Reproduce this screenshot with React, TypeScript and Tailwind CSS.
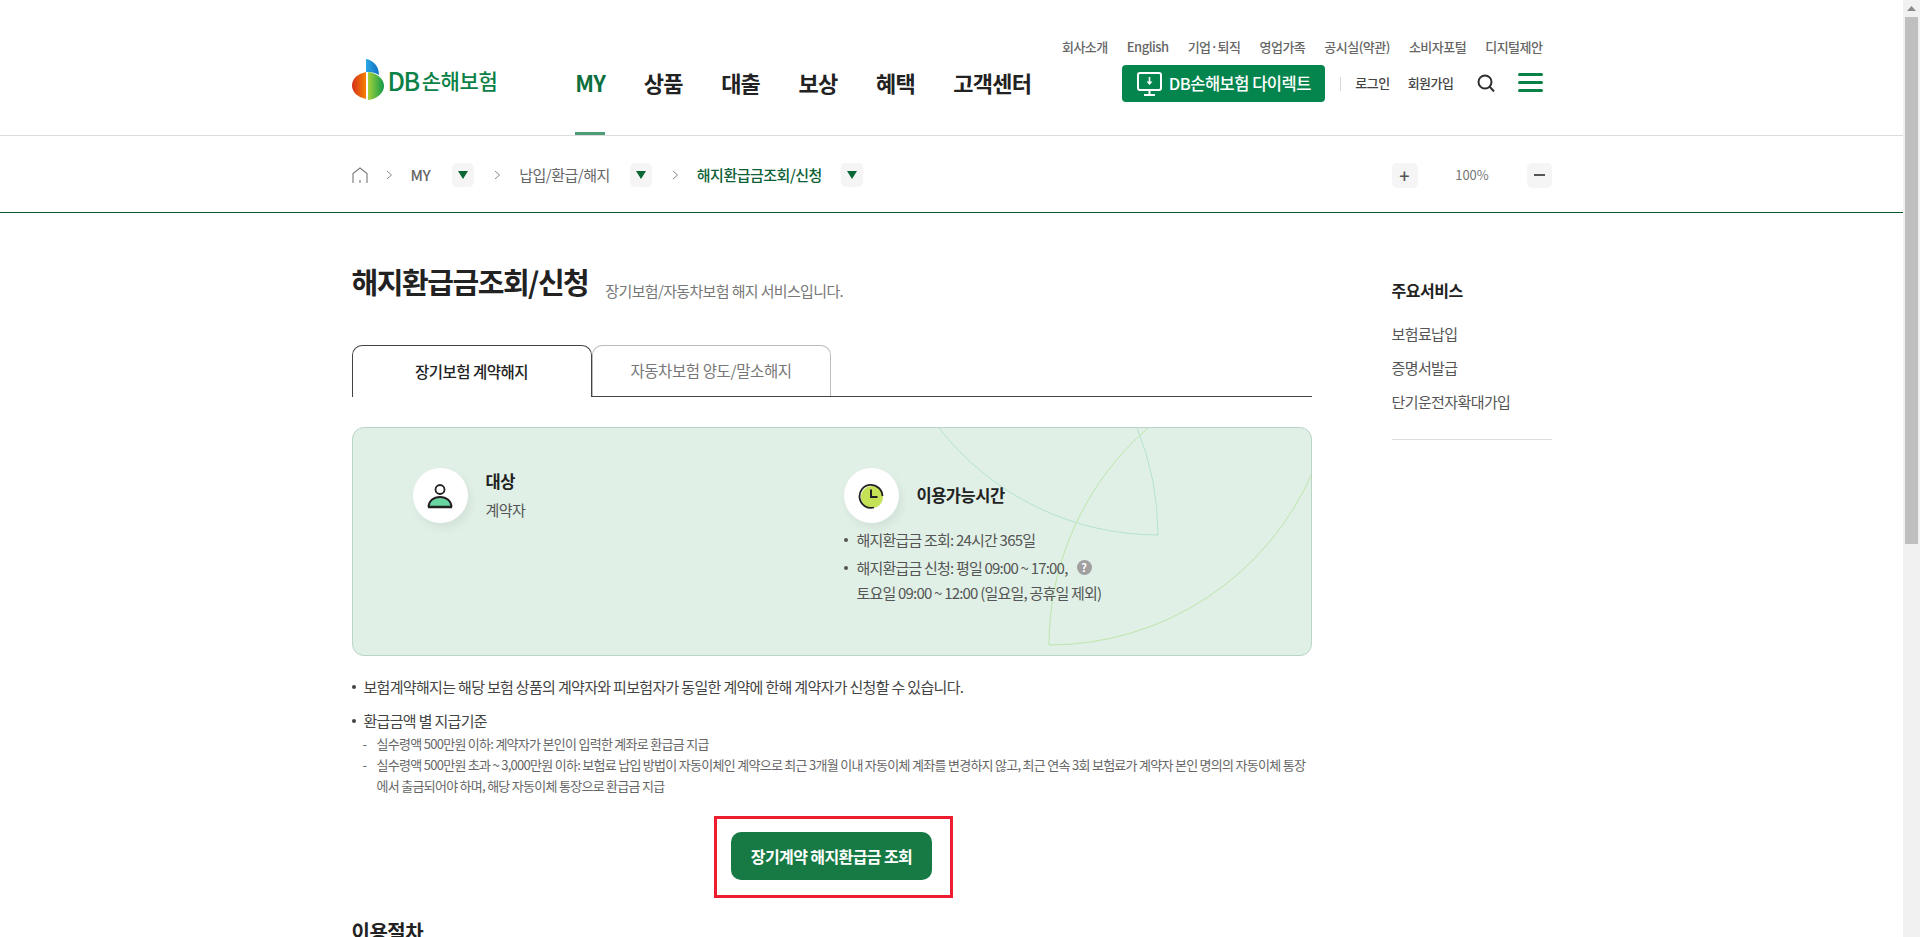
import React from 'react';

const UTIL_LINKS = ['회사소개', 'English', '기업·퇴직', '영업가족', '공시실(약관)', '소비자포털', '디지털제안'];
const NAV_LINKS = ['MY', '상품', '대출', '보상', '혜택', '고객센터'];
const SIDE_LINKS = ['보험료납입', '증명서발급', '단기운전자확대가입'];

const Logo = () => (
  <div className="flex items-center h-[42px]">
    <svg width="33" height="42" viewBox="0 0 33 42" className="shrink-0">
      <defs>
        <linearGradient id="lgOrange" x1="0" x2="1" y1="0" y2="0">
          <stop offset="0" stopColor="#d5301f" />
          <stop offset="1" stopColor="#f58200" />
        </linearGradient>
        <linearGradient id="lgBlue" x1="0" x2="1" y1="0" y2="0">
          <stop offset="0" stopColor="#2aa6e6" />
          <stop offset="1" stopColor="#0f6fc0" />
        </linearGradient>
        <linearGradient id="lgGreen" x1="0" x2="1" y1="0" y2="0">
          <stop offset="0" stopColor="#a5d13a" />
          <stop offset="1" stopColor="#0d9a48" />
        </linearGradient>
      </defs>
      <path d="M14 13C5 15 0 20 0 26.500S5 38 14 40z" fill="url(#lgOrange)" />
      <path d="M14 0c7 1 13 7 13 16-3-2-7-3-11-3h-2z" fill="url(#lgBlue)" />
      <path d="M16 13c9 1 16 7 16 14s-7 13-16 14z" fill="url(#lgGreen)" />
    </svg>
    <span className="ml-[3px] text-[25px] font-medium leading-none tracking-[-1.5px] text-[#0a8146]">DB</span>
    <span className="ml-[3px] text-[21px] font-medium leading-none tracking-[-0.4px] text-[#0a8146]">손해보험</span>
  </div>
);

const HomeIcon = () => (
  <svg width="17" height="17" viewBox="0 0 17 17" fill="none" stroke="#777" strokeWidth="1.1">
    <path d="M1 16V6.500L8 1l7 5.500V16" />
    <path d="M8 13v3" />
  </svg>
);

const Chevron = () => (
  <svg width="7" height="10" viewBox="0 0 7 10" fill="none" stroke="#888" strokeWidth="1">
    <path d="M1 1l4.500 4L1 9" />
  </svg>
);

const DropBox = () => (
  <span className="flex w-[22px] h-[24px] items-center justify-center rounded-[5px] bg-[#f5f5f5]">
    <svg width="10" height="8" viewBox="0 0 10 8">
      <path d="M0 0h10L5 8z" fill="#0a6634" />
    </svg>
  </span>
);

const MonitorIcon = () => (
  <svg width="25" height="24" viewBox="0 0 25 24" fill="none" stroke="#fff" strokeWidth="2">
    <rect x="1" y="1" width="23" height="17" rx="2" />
    <path d="M7 23h11M12.500 18v5" />
    <path d="M12.500 5v7" strokeWidth="1.6" />
    <path d="M9.500 9.500h6l-3 3.500z" fill="#fff" stroke="none" />
  </svg>
);

const SearchIcon = () => (
  <svg width="18" height="18" viewBox="0 0 18 18" fill="none" stroke="#2f2f2f" strokeWidth="2">
    <circle cx="8" cy="8" r="6.500" />
    <path d="M12.500 12.500l4.500 5" />
  </svg>
);

const PersonIcon = () => (
  <svg width="26" height="26" viewBox="0 0 26 26" fill="none">
    <path d="M2 24c0-6 4-9 11-9s11 3 11 9z" fill="#69d6a2" />
    <circle cx="13" cy="6.500" r="4.500" stroke="#222" strokeWidth="1.800" />
    <path d="M1.500 24c0-6 5-10 11.500-10s11.500 4 11.500 10" stroke="#222" strokeWidth="1.800" />
    <path d="M1 24h24" stroke="#222" strokeWidth="2.400" />
  </svg>
);

const ClockIcon = () => (
  <svg width="26" height="26" viewBox="0 0 26 26" fill="none">
    <circle cx="14" cy="14" r="11" fill="#c5e155" />
    <path d="M16 24.500A11.500 11.500 0 1 1 24.500 13" stroke="#222" strokeWidth="1.800" />
    <path d="M13 6.500V14h6.500" stroke="#222" strokeWidth="2" />
  </svg>
);

const BoxArcs = () => (
  <svg className="absolute left-0 top-0" width="960" height="229" viewBox="0 0 960 229" fill="none">
    <path d="M586 0A278 278 0 0 0 805 107A283 283 0 0 0 784 0" stroke="#b6e2cd" strokeWidth="1" />
    <path d="M795 0A287 287 0 0 0 696 217A287 287 0 0 0 960 43" stroke="#bde6a8" strokeWidth="1" />
  </svg>
);

export default function App() {
  return (
    <div className="flex h-[937px] w-full overflow-hidden bg-white font-['Noto_Sans_CJK_KR','Noto_Sans',sans-serif] text-[#333]">
      <div className="min-w-0 flex-1">
        {/* Header */}
        <header className="h-[136px] border-b border-[#dcdcdc]">
          <div className="mx-auto flex h-[135px] w-[1200px]">
            <div className="mt-[59px] self-start">
              <Logo />
            </div>
            <nav className="ml-[78px] flex gap-[38.500px]">
              {NAV_LINKS.map((item, i) => (
                <a
                  key={item}
                  className={`flex h-[135px] items-start border-b-[3px] pt-[67px] text-[22px] leading-[30px] font-bold tracking-[-0.8px] ${
                    i === 0 ? 'border-[#4d9e76] text-[#0e6f3e]' : 'border-transparent text-[#222]'
                  }`}
                >
                  {item}
                </a>
              ))}
            </nav>
            <div className="ml-auto flex flex-col items-end pr-[9px] pt-[37px]">
              <ul className="flex h-[20px] items-center gap-[19px] text-[13px] font-medium tracking-[-0.5px] text-[#666]">
                {UTIL_LINKS.map((item) => (
                  <li key={item}>{item}</li>
                ))}
              </ul>
              <div className="mt-[8px] flex items-center">
                <a className="flex h-[37px] w-[203px] items-center justify-center gap-[7px] rounded-[4px] bg-[#05854e] text-[16.500px] font-medium tracking-[-0.5px] text-white">
                  <MonitorIcon />
                  DB손해보험 다이렉트
                </a>
                <span className="ml-[15px] h-[14px] w-px bg-[#d8d8d8]" />
                <a className="ml-[14px] pb-[2px] text-[13px] font-medium tracking-[-0.5px] text-[#444]">로그인</a>
                <a className="ml-[18px] pb-[2px] text-[13px] font-medium tracking-[-0.5px] text-[#444]">회원가입</a>
                <span className="ml-[23px] flex pb-[2px]">
                  <SearchIcon />
                </span>
                <span className="ml-[23px] flex w-[25px] flex-col gap-[5px] pb-[2px]">
                  <span className="h-[3px] rounded-sm bg-[#0a8146]" />
                  <span className="h-[3px] rounded-sm bg-[#0a8146]" />
                  <span className="h-[3px] rounded-sm bg-[#0a8146]" />
                </span>
              </div>
            </div>
          </div>
        </header>

        {/* Breadcrumb */}
        <div className="h-[77px] border-b border-[#00582c]">
          <div className="mx-auto flex h-[76px] w-[1200px] items-center pt-[2px]">
            <HomeIcon />
            <span className="ml-[17px] flex"><Chevron /></span>
            <span className="ml-[18px] text-[15px] font-medium tracking-[-0.5px] text-[#666]">MY</span>
            <span className="ml-[22px]"><DropBox /></span>
            <span className="ml-[20px] flex"><Chevron /></span>
            <span className="ml-[18px] text-[15px] tracking-[-0.5px] text-[#666]">납입/환급/해지</span>
            <span className="ml-[20px]"><DropBox /></span>
            <span className="ml-[20px] flex"><Chevron /></span>
            <span className="ml-[18px] text-[15px] font-medium tracking-[-0.5px] text-[#0d6136]">해지환급금조회/신청</span>
            <span className="ml-[19px]"><DropBox /></span>
            <div className="ml-auto flex items-center">
              <span className="flex h-[25px] w-[26px] items-center justify-center rounded-[5px] bg-[#f5f5f5] text-[18px] font-medium leading-none text-[#555]">+</span>
              <span className="w-[109px] text-center text-[13px] text-[#777]">100%</span>
              <span className="flex h-[25px] w-[25px] items-center justify-center rounded-[5px] bg-[#f5f5f5]">
                <span className="h-[2px] w-[11px] bg-[#555]" />
              </span>
            </div>
          </div>
        </div>

        <div className="mx-auto flex w-[1200px]">
          {/* Main column */}
          <main className="w-[960px]">
            <div className="flex items-start pt-[44px]">
              <h1 className="text-[29px] leading-[48px] font-bold tracking-[-1.450px] text-[#222]">해지환급금조회/신청</h1>
              <p className="ml-[17px] mt-[23px] text-[15px] leading-[22px] tracking-[-0.650px] text-[#777]">장기보험/자동차보험 해지 서비스입니다.</p>
            </div>

            <div className="mt-[40px] flex h-[52px] border-b border-[#444]">
              <div className="z-10 flex h-[52px] w-[240px] items-center justify-center rounded-t-[10px] border border-b-0 border-[#444] bg-white text-[15.500px] font-medium tracking-[-0.5px] text-[#222]">
                장기보험 계약해지
              </div>
              <div className="flex h-[51px] w-[239px] items-center justify-center rounded-t-[10px] border border-b-0 border-[#bbb] text-[15.500px] tracking-[-0.4px] text-[#777]">
                자동차보험 양도/말소해지
              </div>
            </div>

            <section className="relative mt-[30px] flex h-[229px] w-[960px] overflow-hidden rounded-[12px] border border-[#b9d5c6] bg-[#e0f0e6] pl-[60px] pt-[40px]">
              <BoxArcs />
              <div className="relative flex w-[431px]">
                <span className="flex size-[55px] items-center justify-center rounded-full bg-white shadow-[3px_5px_10px_rgba(0,0,0,0.06)]">
                  <PersonIcon />
                </span>
                <div className="ml-[18px]">
                  <p className="text-[16.500px] leading-[26px] font-bold tracking-[-0.5px] text-[#222]">대상</p>
                  <p className="mt-[4px] text-[15px] leading-[24px] tracking-[-0.6px] text-[#555]">계약자</p>
                </div>
              </div>
              <div className="relative">
                <div className="flex items-center">
                  <span className="flex size-[55px] items-center justify-center rounded-full bg-white shadow-[3px_5px_10px_rgba(0,0,0,0.06)]">
                    <ClockIcon />
                  </span>
                  <p className="ml-[18px] text-[16.500px] font-bold tracking-[-0.5px] text-[#222]">이용가능시간</p>
                </div>
                <ul className="mt-[4px] text-[15px] leading-[25px] tracking-[-0.8px] text-[#555]">
                  <li className="flex">
                    <span className="mr-[9px] mt-[11px] size-[4px] rounded-full bg-[#555]" />
                    해지환급금 조회: 24시간 365일
                  </li>
                  <li className="mt-[3px] flex">
                    <span className="mr-[9px] mt-[11px] size-[4px] shrink-0 rounded-full bg-[#555]" />
                    <span>
                      <span className="flex items-center">
                        해지환급금 신청: 평일 09:00 ~ 17:00,
                        <span className="ml-[9px] flex size-[15px] items-center justify-center rounded-full bg-[#a0a0a0] text-[11px] font-bold leading-none tracking-normal text-white">?</span>
                      </span>
                      토요일 09:00 ~ 12:00 (일요일, 공휴일 제외)
                    </span>
                  </li>
                </ul>
              </div>
            </section>

            <div className="mt-[20px] text-[15px] tracking-[-0.680px] text-[#444]">
              <p className="flex h-[22px] items-center">
                <span className="mr-[8px] size-[4px] rounded-full bg-[#444]" />
                보험계약해지는 해당 보험 상품의 계약자와 피보험자가 동일한 계약에 한해 계약자가 신청할 수 있습니다.
              </p>
              <p className="mt-[12px] flex h-[22px] items-center">
                <span className="mr-[8px] size-[4px] rounded-full bg-[#444]" />
                환급금액 별 지급기준
              </p>
              <ul className="mt-[1px] text-[13px] leading-[21px] tracking-[-0.720px] text-[#666]">
                <li className="flex">
                  <span className="w-[25px] pl-[11px]">-</span>
                  실수령액 500만원 이하: 계약자가 본인이 입력한 계좌로 환급금 지급
                </li>
                <li className="flex">
                  <span className="w-[25px] shrink-0 pl-[11px]">-</span>
                  <span>
                    실수령액 500만원 초과 ~ 3,000만원 이하: 보험료 납입 방법이 자동이체인 계약으로 최근 3개월 이내 자동이체 계좌를 변경하지 않고, 최근 연속 3회 보험료가 계약자 본인 명의의 자동이체 통장에서 출금되어야 하며, 해당 자동이체 통장으로 환급금 지급
                  </span>
                </li>
              </ul>
            </div>

            <div className="mt-[36px] flex justify-center">
              <div className="relative">
                <a className="flex h-[48px] w-[201px] items-center justify-center rounded-[10px] bg-[#177a44] text-[16px] font-bold tracking-[-0.6px] text-white">
                  장기계약 해지환급금 조회
                </a>
                <span className="absolute -top-[16px] -bottom-[18px] -left-[17px] -right-[21px] border-[3px] border-[#ed1c2e]" />
              </div>
            </div>

            <h2 className="mt-[37px] text-[20px] font-bold tracking-[-0.5px] text-[#222]">이용절차</h2>
          </main>

          {/* Side column */}
          <aside className="ml-auto w-[160px] pt-[64px]">
            <h3 className="text-[16px] font-bold leading-[26px] tracking-[-0.5px] text-[#222]">주요서비스</h3>
            <ul className="mt-[19px] border-b border-[#dedede] pb-[25px] text-[15px] leading-[24px] tracking-[-0.6px] text-[#555]">
              {SIDE_LINKS.map((item) => (
                <li key={item} className="mb-[10px] last:mb-0">{item}</li>
              ))}
            </ul>
          </aside>
        </div>
      </div>

      {/* Scrollbar */}
      <div className="flex h-full w-[17px] shrink-0 flex-col items-center bg-[#f1f1f1]">
        <div className="flex h-[17px] items-center justify-center">
          <svg width="9" height="5" viewBox="0 0 9 5"><path d="M4.500 0L9 5H0z" fill="#8a8a8a" /></svg>
        </div>
        <div className="h-[527px] w-[13px] bg-[#bfbfbf]" />
      </div>
    </div>
  );
}
